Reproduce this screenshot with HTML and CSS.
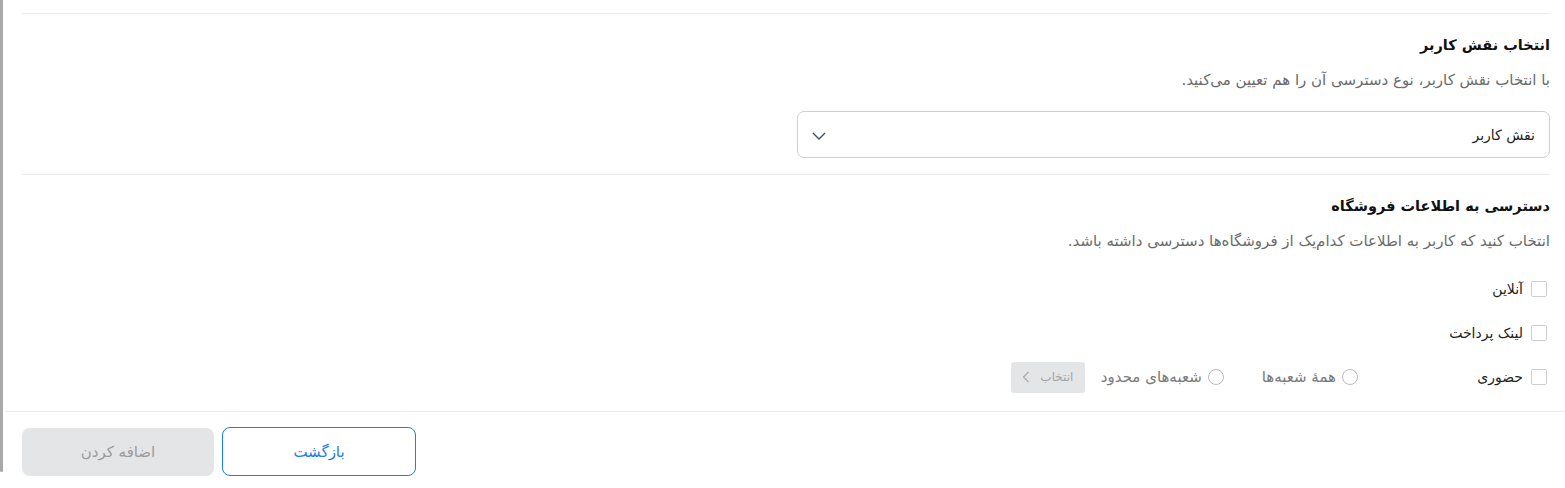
FILE: index.html
```
<!DOCTYPE html>
<html lang="fa" dir="rtl">
<head>
  <meta charset="UTF-8" />
  <meta name="viewport" content="width=device-width, initial-scale=1.0" />
  <title>افزودن کاربر</title>
  <link rel="stylesheet" href="styles.css">
</head>
<body>
  <div class="frame">
    <div class="page">
      <div class="content">
        <div class="divider"></div>

        <!-- نقش کاربر -->
        <div class="section">
          <h3 class="section-title">انتخاب نقش کاربر</h3>
          <p class="section-desc">با انتخاب نقش کاربر، نوع دسترسی آن را هم تعیین می‌کنید.</p>
          <div class="select-box">
            <span class="select-value">نقش کاربر</span>
            <svg class="select-arrow" width="14" height="8" viewBox="0 0 14 8"><path d="M1 1l6 6 6-6" fill="none" stroke="#3a4a5c" stroke-width="1.3"/></svg>
          </div>
        </div>

        <div class="divider"></div>

        <!-- دسترسی فروشگاه -->
        <div class="section">
          <h3 class="section-title">دسترسی به اطلاعات فروشگاه</h3>
          <p class="section-desc">انتخاب کنید که کاربر به اطلاعات کدام‌یک از فروشگاه‌ها دسترسی داشته باشد.</p>
          <div class="options">
            <div class="option-row">
              <label class="check"><span class="check-box"></span>آنلاین</label>
            </div>
            <div class="option-row">
              <label class="check"><span class="check-box"></span>لینک پرداخت</label>
            </div>
            <div class="option-row">
              <label class="check check-wide"><span class="check-box"></span>حضوری</label>
              <label class="radio"><span class="radio-dot"></span>همهٔ شعبه‌ها</label>
              <label class="radio"><span class="radio-dot"></span>شعبه‌های محدود</label>
              <button class="pick-btn" disabled>انتخاب
                <svg width="8" height="12" viewBox="0 0 8 12"><path d="M6.5 1L1.5 6l5 5" fill="none" stroke="#aaa" stroke-width="1.2"/></svg>
              </button>
            </div>
          </div>
        </div>
      </div>

      <div class="footer">
        <button class="btn btn-outline">بازگشت</button>
        <button class="btn btn-disabled" disabled>اضافه کردن</button>
      </div>
    </div>
  </div>
</body>
</html>
```

FILE: styles.css
```
body {
  margin: 0;
  background: #fff;
  font-family: "DejaVu Sans", sans-serif;
  color: #1c1c1c;
  overflow: hidden;
}
.frame {
  display: flex;
  direction: ltr;
  height: 488px;
}
.frame::before {
  content: "";
  width: 3px;
  height: 472px;
  background: #a9a9a9;
  border-radius: 0 0 2px 2px;
  flex-shrink: 0;
}
.page {
  flex: 1;
  direction: rtl;
}
.content {
  padding: 13px 15px 0 19px;
}
.divider {
  height: 1px;
  background: #ececef;
}
.section {
  padding-top: 19px;
  padding-bottom: 16px;
}
.section-title {
  margin: 0;
  font-size: 14.5px;
  font-weight: bold;
  line-height: 24px;
  color: #111;
}
.section-desc {
  margin: 12px 0 0;
  font-size: 15px;
  line-height: 22px;
  color: #6b6b6b;
}
.select-box {
  margin-top: 20px;
  height: 45px;
  border: 1px solid #cfcfd2;
  border-radius: 7px;
  display: flex;
  align-items: center;
  justify-content: space-between;
  padding: 0 14px;
  width: 723px;
}
.select-value {
  font-size: 14px;
  color: #222;
}
.select-arrow {
  margin-top: 2px;
}
.options {
  margin-top: 21px;
  display: flex;
  flex-direction: column;
  gap: 12px;
  padding-right: 3px;
}
.option-row {
  display: flex;
  align-items: center;
  height: 32px;
}
.check {
  display: flex;
  align-items: center;
  gap: 8px;
  font-size: 14px;
  color: #222;
}
.check-wide {
  width: 180px;
  margin-left: 9px;
}
.check-box {
  width: 14px;
  height: 14px;
  border: 1px solid #cdced2;
  border-radius: 2px;
}
.radio {
  display: flex;
  align-items: center;
  gap: 6px;
  font-size: 15px;
  color: #7a7a7a;
  margin-left: 38px;
}
.radio + .radio {
  margin-left: 16px;
}
.radio-dot {
  width: 14px;
  height: 14px;
  border: 1px solid #b9bbc0;
  border-radius: 50%;
}
.pick-btn {
  display: flex;
  align-items: center;
  gap: 10px;
  height: 31px;
  width: 74px;
  justify-content: center;
  background: #e4e5e7;
  border: none;
  border-radius: 3px;
  font-family: inherit;
  font-size: 12px;
  color: #a3a3a3;
  padding: 0 8px;
}
.footer {
  margin-top: 2px;
  margin-left: 2px;
  margin-right: -3px;
  border-top: 1px solid #ececef;
  padding: 15px 0 0 17px;
  display: flex;
  justify-content: flex-end;
  gap: 8px;
}
.btn {
  font-family: inherit;
  font-size: 15px;
  border-radius: 8px;
  height: 49px;
  cursor: pointer;
}
.btn-outline {
  width: 194px;
  background: #fff;
  border: 1px solid #1c7cf0;
  color: #1c7cf0;
}
.btn-disabled {
  width: 192px;
  height: 48px;
  margin-top: 1px;
  background: #e4e5e7;
  border: none;
  color: #9b9b9b;
}
```
